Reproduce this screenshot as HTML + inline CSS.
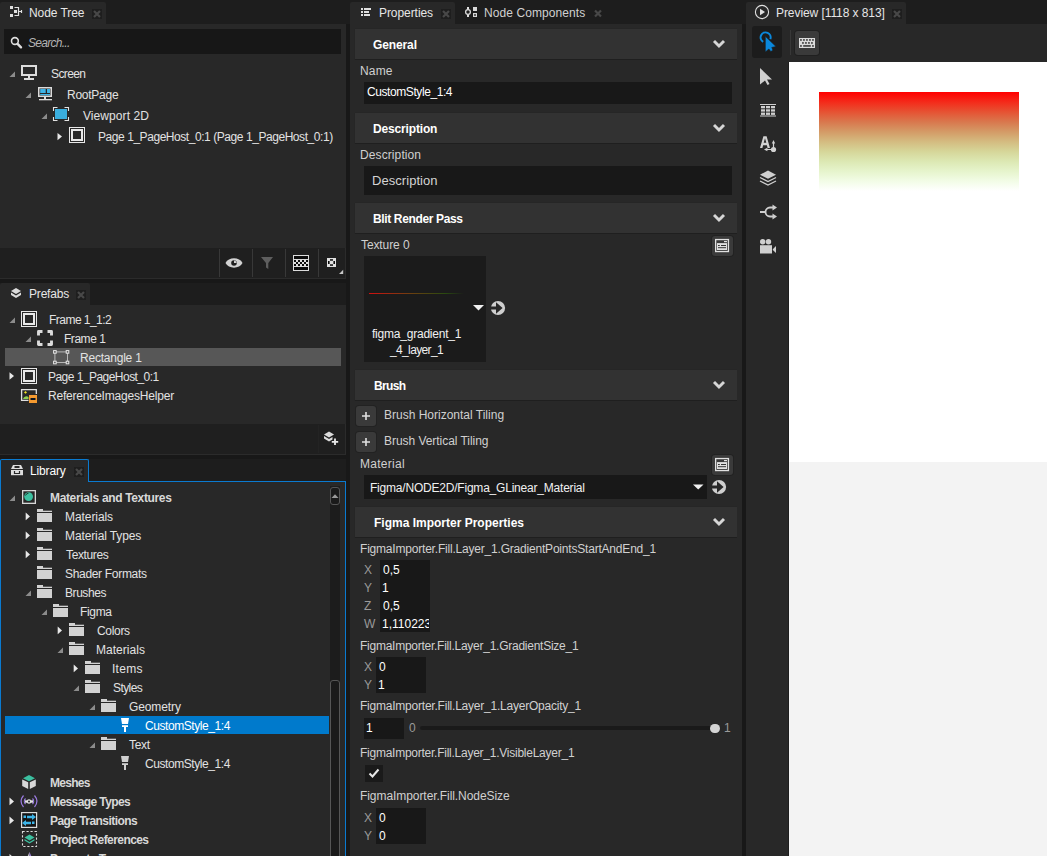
<!DOCTYPE html>
<html><head><meta charset="utf-8">
<style>
*{margin:0;padding:0;box-sizing:border-box}
html,body{width:1047px;height:856px;overflow:hidden;background:#181818;font-family:"Liberation Sans",sans-serif;font-size:12px;color:#dcdcdc}
.a{position:absolute}
.t{position:absolute;white-space:nowrap;line-height:16px;font-size:12px}
.p{position:absolute;background:#282828}
.tab{position:absolute;background:#282828;border-radius:2px 2px 0 0}
.hdr{position:absolute;left:355px;width:382px;height:31px;background:#323232;border-bottom:1px solid #1f1f1f;box-shadow:0 -1px 0 #262626,-1px 0 0 #262626}
.in{position:absolute;background:#181818}
#ic{position:absolute;left:0;top:0;width:1047px;height:856px}
</style></head><body>
<!-- top header strip -->
<div class="a" style="left:0;top:0;width:1047px;height:24px;background:#1d1d1d"></div>

<!-- ===== Node Tree ===== -->
<div class="tab" style="left:0;top:2px;width:106px;height:22px"></div>
<div class="p" style="left:0;top:24px;width:346px;height:224px"></div>
<div class="in" style="left:4px;top:29px;width:337px;height:25px;background:#171717"></div>
<div class="a" style="left:0;top:248px;width:346px;height:31px;background:#1f1f1f;border-bottom:1px solid #2b2b2b;border-right:1px solid #2b2b2b"></div>
<div class="a" style="left:219px;top:249px;width:1px;height:28px;background:#383838"></div>
<div class="a" style="left:252px;top:249px;width:1px;height:28px;background:#383838"></div>
<div class="a" style="left:285px;top:249px;width:1px;height:28px;background:#383838"></div>
<div class="a" style="left:318px;top:249px;width:1px;height:28px;background:#383838"></div>

<!-- ===== Prefabs ===== -->
<div class="a" style="left:0;top:283px;width:346px;height:22px;background:#1d1d1d"></div>
<div class="tab" style="left:0;top:283px;width:90px;height:22px"></div>
<div class="p" style="left:0;top:305px;width:346px;height:119px"></div>
<div class="a" style="left:5px;top:348px;width:336px;height:18px;background:#575757"></div>
<div class="a" style="left:0;top:424px;width:346px;height:31px;background:#1f1f1f;border-bottom:1px solid #2b2b2b;border-right:1px solid #2b2b2b"></div>

<div class="a" style="left:318px;top:425px;width:1px;height:28px;background:#232323"></div>
<!-- ===== Library ===== -->
<div class="a" style="left:0;top:459px;width:346px;height:22px;background:#1d1d1d"></div>
<div class="tab" style="left:0;top:459px;width:89px;height:23px;border:1px solid #0a7ad0;border-bottom:none"></div>
<div class="p" style="left:0;top:481px;width:346px;height:375px;border:1px solid #0a7ad0;border-top:none;border-bottom:none"></div>
<div class="a" style="left:88px;top:481px;width:258px;height:1px;background:#0a7ad0"></div>
<div class="a" style="left:5px;top:716px;width:324px;height:18px;background:#007acc"></div>
<div class="a" style="left:330px;top:486px;width:10px;height:370px;background:#1c1c1c"></div>
<div class="a" style="left:330px;top:487px;width:10px;height:18px;border:1px solid #555;border-radius:3px;background:#1a1a1a"></div>
<div class="a" style="left:330px;top:680px;width:10px;height:190px;border:1px solid #555;border-radius:3px;background:#1a1a1a"></div>

<!-- ===== Properties ===== -->
<div class="tab" style="left:350px;top:2px;width:105px;height:22px"></div>
<div class="p" style="left:350px;top:24px;width:392px;height:832px"></div>
<div class="hdr" style="top:29px"></div>
<div class="in" style="left:364px;top:82px;width:368px;height:22px"></div>
<div class="hdr" style="top:113px"></div>
<div class="in" style="left:364px;top:166px;width:368px;height:29px"></div>
<div class="hdr" style="top:203px"></div>
<div class="a" style="left:712px;top:236px;width:21px;height:20px;background:#3a3a3a;border-radius:3px;box-shadow:0 0 0 1px #222"></div>
<div class="in" style="left:364px;top:256px;width:122px;height:106px;background:#1b1b1b"></div>
<div class="a" style="left:369px;top:293px;width:95px;height:1px;background:linear-gradient(90deg,#d01010,#6a4010 45%,#2a4a10 80%,#1b1b1b)"></div>
<div class="hdr" style="top:370px"></div>
<div class="a" style="left:356px;top:406px;width:20px;height:20px;background:#3a3a3a;border-radius:3px;box-shadow:0 0 0 1px #222"></div>
<div class="a" style="left:356px;top:432px;width:20px;height:20px;background:#3a3a3a;border-radius:3px;box-shadow:0 0 0 1px #222"></div>
<div class="a" style="left:712px;top:455px;width:21px;height:20px;background:#3a3a3a;border-radius:3px;box-shadow:0 0 0 1px #222"></div>
<div class="in" style="left:364px;top:475px;width:343px;height:24px"></div>
<div class="hdr" style="top:507px"></div>
<div class="in" style="left:380px;top:560px;width:50px;height:72px"></div>
<div class="in" style="left:376px;top:657px;width:50px;height:36px"></div>
<div class="in" style="left:364px;top:718px;width:40px;height:21px"></div>
<div class="a" style="left:420px;top:726px;width:295px;height:4px;background:#1a1a1a;border-radius:2px"></div>
<div class="a" style="left:710px;top:723.5px;width:9.5px;height:9.5px;background:#d4d4d4;border-radius:50%"></div>
<div class="in" style="left:365px;top:765px;width:18px;height:17px;background:#1a1a1a"></div>
<div class="in" style="left:376px;top:808px;width:50px;height:36px"></div>

<!-- ===== Preview ===== -->
<div class="tab" style="left:746px;top:2px;width:160px;height:22px"></div>
<div class="p" style="left:746px;top:24px;width:301px;height:832px"></div>
<div class="a" style="left:752px;top:26px;width:30px;height:32px;background:#1c1c1c;border-radius:3px"></div>
<div class="a" style="left:790px;top:30px;width:1px;height:25px;background:#383838"></div>
<div class="a" style="left:795px;top:31px;width:24px;height:24px;background:#3a3a3a;border-radius:3px;box-shadow:0 0 0 1px #202020"></div>
<div class="a" style="left:788px;top:62px;width:1px;height:794px;background:#1e1e1e"></div>
<div class="a" style="left:789px;top:62px;width:258px;height:400px;background:#fff"></div>
<div class="a" style="left:789px;top:462px;width:258px;height:394px;background:#f3f3f3"></div>
<div id="grad" class="a" style="left:819px;top:92px;width:200px;height:99px"></div>

<svg id="ic" width="1047" height="856" viewBox="0 0 1047 856">
<defs>
 <linearGradient id="pg" x1="0" y1="0" x2="0" y2="1">
  <stop offset="0" stop-color="#ff0000"/>
  <stop offset="0.1" stop-color="#f42a1a"/>
  <stop offset="0.2" stop-color="#e65233"/>
  <stop offset="0.3" stop-color="#d9774d"/>
  <stop offset="0.4" stop-color="#d49a66"/>
  <stop offset="0.5" stop-color="#d4bb80"/>
  <stop offset="0.6" stop-color="#d6d699"/>
  <stop offset="0.7" stop-color="#dce8b3"/>
  <stop offset="0.8" stop-color="#e6f4cc"/>
  <stop offset="0.9" stop-color="#f2fce6"/>
  <stop offset="1" stop-color="#ffffff"/>
 </linearGradient>
</defs>
<!-- preview gradient -->
<rect x="819" y="92" width="200" height="99" fill="url(#pg)"/>

<!-- ===== tab icons ===== -->
<!-- node tree icon -->
<g fill="#e0e0e0">
 <rect x="10" y="6" width="3" height="3"/><rect x="14" y="10" width="3" height="3"/><rect x="10" y="14" width="3" height="3"/>
</g>
<path d="M14.5 7.5H18.5V15.5H14.5M18.5 11.5H21.5M21.5 10V13" stroke="#e0e0e0" stroke-width="1.2" fill="none"/>
<!-- close boxes -->
<g>
 <rect x="92" y="9" width="10" height="10" fill="#1e1e1e"/>
 <path d="M94 11L100 17M100 11L94 17" stroke="#484848" stroke-width="2.2"/>
 <rect x="76" y="290" width="10" height="10" fill="#1e1e1e"/>
 <path d="M78 292L84 298M84 292L78 298" stroke="#484848" stroke-width="2.2"/>
 <rect x="74" y="467" width="10" height="10" fill="#1e1e1e"/>
 <path d="M76 469L82 475M82 469L76 475" stroke="#484848" stroke-width="2.2"/>
 <rect x="441" y="9" width="10" height="10" fill="#1e1e1e"/>
 <path d="M443 11L449 17M449 11L443 17" stroke="#484848" stroke-width="2.2"/>
 <path d="M595 10.5L601 16.5M601 10.5L595 16.5" stroke="#484848" stroke-width="2.2"/>
 <rect x="892" y="9" width="10" height="10" fill="#1e1e1e"/>
 <path d="M894 11L900 17M900 11L894 17" stroke="#484848" stroke-width="2.2"/>
</g>
<!-- search -->
<circle cx="14.9" cy="41" r="3.4" stroke="#dedede" stroke-width="1.6" fill="none"/>
<path d="M17.6 43.8L21 47.3" stroke="#dedede" stroke-width="2.4" stroke-linecap="round"/>

<!-- ===== node tree ===== -->
<g fill="#8c8c8c">
 <path d="M9.5 77L15 77L15 71.5Z"/>
 <path d="M25.5 98L31 98L31 92.5Z"/>
 <path d="M41.5 119L47 119L47 113.5Z"/>
</g>
<path d="M57.5 133L62 136.6L57.5 140.2Z" fill="#e8e8e8"/>
<!-- screen icon -->
<rect x="22" y="66" width="14" height="9" stroke="#dcdcdc" stroke-width="2" fill="none"/>
<rect x="28" y="76" width="2" height="2" fill="#dcdcdc"/>
<rect x="24" y="78" width="10" height="2" fill="#dcdcdc"/>
<!-- rootpage icon -->
<rect x="38.75" y="87.75" width="12.5" height="8.5" stroke="#dcdcdc" stroke-width="1.5" fill="none"/>
<rect x="40.2" y="89" width="5.5" height="4" fill="#3db4e8"/>
<rect x="47" y="89" width="3" height="4" fill="#3db4e8"/>
<rect x="40.2" y="94" width="9.8" height="1.2" fill="#3db4e8"/>
<rect x="44" y="97" width="2" height="2" fill="#dcdcdc"/>
<rect x="39" y="99" width="13" height="1.3" fill="#dcdcdc"/>
<!-- viewport icon -->
<path d="M53.5 111V107.5H57.5M64.5 107.5H68.5V111M68.5 117V120.5H64.5M57.5 120.5H53.5V117" stroke="#e4e4e4" stroke-width="1.1" fill="none"/>
<rect x="55" y="109" width="12" height="10" fill="#3aaede"/>
<!-- page icon (double square) -->
<g id="dsq">
<rect x="69.5" y="127.5" width="15" height="15" stroke="#e8e8e8" stroke-width="1" fill="none"/>
<rect x="72" y="130" width="10" height="10" stroke="#e8e8e8" stroke-width="2" fill="none"/>
</g>

<!-- toolbar icons -->
<path d="M225.5 263C228.5 256.8 239.5 256.8 242.5 263C239.5 269.2 228.5 269.2 225.5 263Z" fill="#d2d2d2"/>
<circle cx="234" cy="263" r="2.8" fill="#1f1f1f"/>
<path d="M234 263L234 260.5A2.5 2.5 0 0 1 236.5 263Z" fill="#d2d2d2"/>
<path d="M261 257H273L268.3 263V269L266 267.5V263Z" fill="#5e5e5e"/>
<rect x="293" y="255" width="16" height="16" fill="#dcdcdc"/>
<g fill="#0c0c0c">
<rect x="294" y="256" width="14" height="3"/><rect x="294" y="267" width="14" height="3"/>
<rect x="294" y="260" width="2" height="2"/><rect x="298" y="260" width="2" height="2"/><rect x="302" y="260" width="2" height="2"/><rect x="306" y="260" width="2" height="2"/>
<rect x="296" y="262" width="2" height="2"/><rect x="300" y="262" width="2" height="2"/><rect x="304" y="262" width="2" height="2"/>
<rect x="294" y="264" width="2" height="2"/><rect x="298" y="264" width="2" height="2"/><rect x="302" y="264" width="2" height="2"/><rect x="306" y="264" width="2" height="2"/>
</g>
<rect x="327" y="258" width="9" height="9" fill="#e0e0e0"/>
<g fill="#0c0c0c"><rect x="330" y="259.2" width="3" height="1.5"/><rect x="330" y="264.3" width="3" height="1.5"/><rect x="328" y="261" width="1.6" height="3"/><rect x="333.4" y="261" width="1.6" height="3"/></g>

<path d="M339 274H343.2V269.8Z" fill="#c8c8c8"/>

<!-- ===== prefabs ===== -->
<path d="M16 288L21 291L16 294L11 291Z" fill="#dcdcdc"/>
<path d="M11 292.5L16 295.5L21 292.5V295L16 298L11 295Z" fill="#dcdcdc"/>
<path d="M9.5 323L15 323L15 317.5Z" fill="#8c8c8c"/>
<path d="M25.5 342L31 342L31 336.5Z" fill="#8c8c8c"/>
<use href="#dsq" x="-48" y="184"/>
<!-- frame 1 corners -->
<path d="M38.5 335.5V331.5H42.5M47.5 331.5H51.5V335.5M51.5 340.5V344.5H47.5M42.5 344.5H38.5V340.5" stroke="#dcdcdc" stroke-width="2.9" stroke-linejoin="round" fill="none"/>
<!-- rectangle -->
<rect x="54.9" y="351.9" width="12.6" height="10.6" stroke="#b8b8b8" stroke-width="1" fill="none"/>
<g stroke="#e8e8e8" stroke-width="1" fill="#575757">
<rect x="53.6" y="350.6" width="2.6" height="2.6"/><rect x="66.2" y="350.6" width="2.6" height="2.6"/>
<rect x="53.6" y="361.2" width="2.6" height="2.6"/><rect x="66.2" y="361.2" width="2.6" height="2.6"/>
</g>
<path d="M9.5 372.3L14 376L9.5 379.7Z" fill="#e8e8e8"/>
<use href="#dsq" x="-48" y="241"/>
<!-- reference images helper -->
<path d="M36.3 394V389.6H21.6V400.4H28.5" stroke="#e0e0e0" stroke-width="1.3" fill="none"/>
<path d="M25.5 391L27 392.4L25.5 393.8L24 392.4Z" fill="#f0e020"/>
<path d="M23 399C24 396.5 26.5 395.5 28.5 397V399Z" fill="#90d050"/>
<rect x="29" y="395" width="8" height="8" fill="#f59a30"/>
<rect x="30.5" y="398" width="5" height="2" fill="#0c1420"/>
<!-- add prefab icon -->
<path d="M329 431.5L334 434.5L329 437.5L324 434.5Z" fill="#dcdcdc"/>
<path d="M324 436L329 439L332.5 437V439.5L329 441.5L324 438.5Z" fill="#dcdcdc"/>
<path d="M335 438.5V445M331.8 441.8H338.2" stroke="#e8e8e8" stroke-width="1.8"/>

<!-- ===== library ===== -->
<path d="M13 465H21L23 469H11Z" fill="#dedede"/>
<rect x="14.5" y="466" width="5" height="2" fill="#282828"/>
<rect x="11" y="470" width="12" height="5.2" fill="#dedede"/>
<path d="M14.5 471V473.5H19.5V471" stroke="#282828" stroke-width="1.2" fill="none"/>
<!-- triangles library -->
<g fill="#8c8c8c">
<path d="M9.5 501L15 501L15 495.5Z"/>
<path d="M25.5 596L31 596L31 590.5Z"/>
<path d="M41.5 615L47 615L47 609.5Z"/>
<path d="M57.5 653L63 653L63 647.5Z"/>
<path d="M73.5 691L79 691L79 685.5Z"/>
<path d="M89.5 710L95 710L95 704.5Z"/>
<path d="M89.5 748L95 748L95 742.5Z"/>
</g>
<g fill="#e8e8e8">
<path d="M25.7 512.6L30 516.4L25.7 520.3Z"/>
<path d="M25.7 531.6L30 535.4L25.7 539.3Z"/>
<path d="M25.7 550.6L30 554.4L25.7 558.3Z"/>
<path d="M57.7 626.6L62 630.4L57.7 634.3Z"/>
<path d="M73.7 664.6L78 668.4L73.7 672.3Z"/>
<path d="M9.5 797.6L14 801.4L9.5 805.3Z"/>
<path d="M9.5 816.6L14 820.4L9.5 824.3Z"/>
</g>
<!-- materials icon -->
<rect x="22.65" y="490.65" width="12.7" height="12.7" stroke="#d8d8d8" stroke-width="1.3" fill="none"/>
<circle cx="28.6" cy="496.6" r="4.4" fill="#3cc0a0"/>
<path d="M25.5 495.5A3.5 3.5 0 0 1 28.5 493.2" stroke="#1e2a26" stroke-width="0.9" fill="none"/>
<!-- folders -->
<g id="fld" fill="#d2d2d2">
<rect x="37" y="509" width="6" height="3"/>
<rect x="37" y="510.7" width="15" height="1.3"/>
<rect x="37" y="513" width="15" height="9"/>
</g>
<use href="#fld" y="19"/><use href="#fld" y="38"/><use href="#fld" y="57"/><use href="#fld" y="76"/>
<use href="#fld" x="16" y="95"/>
<use href="#fld" x="32" y="114"/><use href="#fld" x="32" y="133"/>
<use href="#fld" x="48" y="152"/><use href="#fld" x="48" y="171"/>
<use href="#fld" x="64" y="190"/><use href="#fld" x="64" y="228"/>
<!-- style brush icons -->
<g id="sty" fill="#ffffff">
<path d="M121 718H129L128 724H122Z"/>
<rect x="122" y="725.2" width="6" height="1.8"/>
<rect x="124" y="727" width="2" height="5"/>
</g>
<g fill="#d0d0d0">
<path d="M121 756H129L128 762H122Z"/>
<rect x="122" y="763.2" width="6" height="1.8"/>
<rect x="124" y="765" width="2" height="5"/>
</g>
<!-- meshes -->
<path d="M29 775L35 778.3L29 781.3L23 778.3Z" fill="#3cc0a0"/>
<path d="M22.2 779.5L28.2 782.3V789L22.2 786Z" fill="#d8d8d8"/>
<path d="M29.8 782.3L35.8 779.5V786L29.8 789Z" fill="#d8d8d8"/>
<!-- message types -->
<path d="M23.5 795.5C20.5 799 20.5 803.5 23.5 807M34.5 795.5C37.5 799 37.5 803.5 34.5 807" stroke="#9b7be0" stroke-width="1.2" fill="none"/>
<path d="M25.5 798.5C24 800 24 802.5 25.5 804M32.5 798.5C34 800 34 802.5 32.5 804" stroke="#9b7be0" stroke-width="1.2" fill="none"/>
<rect x="25" y="800.3" width="8" height="2.4" fill="#e0e0e0"/>
<circle cx="29" cy="801.5" r="2.2" fill="#e0e0e0"/>
<circle cx="29" cy="801.5" r="0.9" fill="#111"/>
<!-- page transitions -->
<rect x="21.6" y="812.6" width="15" height="14.8" stroke="#dcdcdc" stroke-width="1.2" fill="#141414"/>
<g fill="#3db4e8">
<rect x="23.5" y="815.5" width="2.5" height="2.5"/>
<path d="M27 815.8H32V814L36 817L32 820V818.2H27Z"/>
<rect x="32" y="821.5" width="2.5" height="2.5"/>
<path d="M31 821.8H26V820L22 823L26 826V824.2H31Z"/>
</g>
<!-- project references -->
<rect x="22.5" y="831.5" width="14" height="15" stroke="#dcdcdc" stroke-width="1.1" stroke-dasharray="2.2 1.8" fill="none"/>
<path d="M29.5 834.5L34.5 837.5L29.5 840.5L24.5 837.5Z" fill="#3cc0a0"/>
<path d="M24.5 839L29.5 842L34.5 839V840.5L29.5 843.5L24.5 840.5Z" fill="#3cc0a0"/>
<!-- property types partial -->
<path d="M9.5 854L13 857L9.5 860Z" fill="#e8e8e8"/>
<path d="M26 860L29.5 852V860Z" fill="#cfcfcf"/>
<path d="M29.5 852L33 860H29.5Z" fill="#a080e0"/>
<!-- scrollbar up arrow -->
<path d="M331.5 498H338.5L335 494.3Z" fill="#9a9a9a"/>

<!-- ===== properties ===== -->
<g fill="#e0e0e0">
<rect x="361" y="8" width="2" height="2"/><rect x="364" y="8" width="7" height="2"/>
<rect x="361" y="11" width="2" height="2"/><rect x="364" y="11" width="5" height="2"/>
<rect x="361" y="14" width="2" height="2"/><rect x="364" y="14" width="6" height="2"/>
</g>
<!-- node components icon -->
<circle cx="468" cy="12" r="2.4" stroke="#d8d8d8" stroke-width="1.3" fill="none"/>
<path d="M468 7V9.6M468 14.4V17" stroke="#e0e0e0" stroke-width="2"/>
<rect x="473" y="7" width="4" height="4" fill="#d8d8d8"/>
<rect x="473.6" y="13.6" width="2.8" height="2.8" stroke="#d8d8d8" stroke-width="1.2" fill="none"/>
<!-- chevrons -->
<g stroke="#d6d6d6" stroke-width="2.9" fill="none" stroke-linecap="butt">
<path d="M714 41L719 46L724 41"/>
<path d="M714 125L719 130L724 125"/>
<path d="M714 215L719 220L724 215"/>
<path d="M714 382L719 387L724 382"/>
<path d="M714 519L719 524L724 519"/>
</g>
<!-- texture/material pick buttons -->
<g id="pk">
<rect x="715.65" y="239.55" width="12.8" height="12" stroke="#e0e0e0" stroke-width="1.3" fill="none"/>
<rect x="724" y="241" width="3" height="1.2" fill="#e0e0e0"/>
<rect x="717" y="243.1" width="10" height="6.9" fill="#e0e0e0"/>
<rect x="718" y="245" width="1.8" height="1" fill="#333"/><rect x="721" y="245" width="5" height="1" fill="#333"/>
<rect x="718" y="247.2" width="8" height="1" fill="#333"/>
</g>
<use href="#pk" y="219"/>
<!-- texture dropdown + reset -->
<path d="M473 305H484L478.5 310.5Z" fill="#f0f0f0"/>
<path d="M693 484.5H703.5L698.2 489.5Z" fill="#f0f0f0"/>
<g id="rst">
<circle cx="498" cy="308" r="7.1" fill="#cfcfcf"/>
<path d="M490 306.4H496V302.3L502.6 308L496 313.7V309.6H490Z" fill="#282828"/>
</g>
<use href="#rst" x="221" y="179"/>
<!-- plus buttons -->
<path d="M362 416H370M366 412V420" stroke="#e0e0e0" stroke-width="1.6"/>
<path d="M362 442H370M366 438V446" stroke="#e0e0e0" stroke-width="1.6"/>
<!-- checkbox check -->
<path d="M369.5 773.5L372.5 776.5L378.5 769.5" stroke="#e8e8e8" stroke-width="2" fill="none"/>

<!-- ===== preview ===== -->
<circle cx="762" cy="12" r="6.6" stroke="#e0e0e0" stroke-width="1.1" fill="none"/>
<path d="M760 8.8V15.2L765 12Z" fill="#e0e0e0"/>
<!-- select tool blue -->
<path d="M763.2 41.8A5 5 0 1 1 770.3 39.2" stroke="#0a88dc" stroke-width="2" fill="none"/>
<path d="M765.3 36.2L776 46.6L771.8 47.4L772.9 50.2L770.8 51.6L768.9 49L765.3 52Z" fill="#0a88dc" stroke="#1c1c1c" stroke-width="0.6"/>
<!-- keyboard -->
<rect x="799" y="38" width="16" height="10" fill="#dadada"/>
<g fill="#151515">
<rect x="800.2" y="39.2" width="1.5" height="1.5"/><rect x="803.2" y="39.2" width="1.5" height="1.5"/><rect x="806.2" y="39.2" width="1.5" height="1.5"/><rect x="809.2" y="39.2" width="1.5" height="1.5"/><rect x="812.2" y="39.2" width="1.5" height="1.5"/>
<rect x="802.2" y="42.2" width="1.5" height="1.5"/><rect x="805.2" y="42.2" width="1.5" height="1.5"/><rect x="808.2" y="42.2" width="1.5" height="1.5"/><rect x="811.2" y="42.2" width="1.5" height="1.5"/>
<rect x="800.2" y="45.2" width="1.5" height="1.5"/><rect x="803.2" y="45.3" width="7.6" height="1.3"/><rect x="812.2" y="45.2" width="1.5" height="1.5"/>
</g>
<!-- left tools -->
<path d="M760 68L772 79.5H767L769.5 84L767.5 85L765 80.5L760 84.5Z" fill="#cfcfcf"/>
<g fill="#cfcfcf">
<rect x="760" y="104" width="16" height="1"/>
<rect x="761" y="106" width="4" height="2.3"/><rect x="766" y="106" width="4" height="2.3"/><rect x="771" y="106" width="4" height="2.3"/>
<rect x="761" y="109.3" width="4" height="2.3"/><rect x="766" y="109.3" width="4" height="2.3"/><rect x="771" y="109.3" width="4" height="2.3"/>
<rect x="761" y="112.6" width="4" height="2.3"/><rect x="766" y="112.6" width="4" height="2.3"/><rect x="771" y="112.6" width="4" height="2.3"/>
<rect x="760" y="115.5" width="16" height="1"/>
</g>
<path d="M760 148L763.4 136.2H766.6L770 148H767.6L766.9 145.2H763.1L762.4 148Z M763.7 142.8H766.3L765 138.2Z" fill="#d2d2d2" fill-rule="evenodd"/>
<path d="M773.5 149V142.5M767 149.5H773" stroke="#d2d2d2" stroke-width="1.2" fill="none"/>
<path d="M771.8 143.6L773.5 140L775.2 143.6Z M767.4 147.8L764 149.5L767.4 151.2Z" fill="#d2d2d2"/>
<circle cx="773.5" cy="149.5" r="2.6" fill="#d2d2d2"/>
<path d="M768 170.5L776 174.7L768 178.8L760 174.7Z" fill="#cfcfcf"/>
<path d="M760 177.5L768 181.5L776 177.5M760 181L768 185L776 181" stroke="#cfcfcf" stroke-width="1.3" fill="none"/>
<path d="M760 212H765.5M775 207.5H770A4.5 4.5 0 0 0 770 216.5H775" stroke="#cfcfcf" stroke-width="1.8" fill="none"/>
<path d="M772.5 204.5L777 207.5L772.5 210.5Z M772.5 213.5L777 216.5L772.5 219.5Z" fill="#cfcfcf"/>
<circle cx="762.7" cy="241.8" r="2.7" fill="#cfcfcf"/>
<circle cx="768.5" cy="241.8" r="2.7" fill="#cfcfcf"/>
<rect x="760" y="245.2" width="12" height="8.3" fill="#cfcfcf"/>
<path d="M772.8 249.3L776 246V253L772.8 250Z" fill="#cfcfcf"/>
</svg>

<div class="t" style="left:29px;top:5px;color:#e6e6e6;letter-spacing:-0.075px">Node Tree</div>
<div class="t" style="left:28px;top:35px;color:#b4b4b4;letter-spacing:-0.713px;font-style:italic">Search...</div>
<div class="t" style="left:51px;top:66px;color:#e2e2e2;letter-spacing:-0.600px">Screen</div>
<div class="t" style="left:67px;top:87px;color:#e2e2e2;letter-spacing:-0.257px">RootPage</div>
<div class="t" style="left:83px;top:108px;color:#e2e2e2;letter-spacing:0.070px">Viewport 2D</div>
<div class="t" style="left:98px;top:129px;color:#e2e2e2;letter-spacing:-0.443px">Page 1_PageHost_0:1 (Page 1_PageHost_0:1)</div>
<div class="t" style="left:29px;top:286px;color:#e6e6e6;letter-spacing:-0.183px">Prefabs</div>
<div class="t" style="left:49px;top:312px;color:#e2e2e2;letter-spacing:-0.530px">Frame 1_1:2</div>
<div class="t" style="left:64px;top:331px;color:#e2e2e2;letter-spacing:-0.467px">Frame 1</div>
<div class="t" style="left:80px;top:350px;color:#e2e2e2;letter-spacing:-0.220px">Rectangle 1</div>
<div class="t" style="left:48px;top:369px;color:#e2e2e2;letter-spacing:-0.533px">Page 1_PageHost_0:1</div>
<div class="t" style="left:48px;top:388px;color:#e2e2e2;letter-spacing:-0.195px">ReferenceImagesHelper</div>
<div class="t" style="left:30px;top:463px;color:#ffffff;letter-spacing:-0.150px">Library</div>
<div class="t" style="left:50px;top:490px;color:#d8d8d8;letter-spacing:-0.348px;font-weight:bold">Materials and Textures</div>
<div class="t" style="left:65px;top:509px;color:#e2e2e2;letter-spacing:-0.075px">Materials</div>
<div class="t" style="left:65px;top:528px;color:#e2e2e2;letter-spacing:-0.115px">Material Types</div>
<div class="t" style="left:66px;top:547px;color:#e2e2e2;letter-spacing:-0.371px">Textures</div>
<div class="t" style="left:65px;top:566px;color:#e2e2e2;letter-spacing:-0.315px">Shader Formats</div>
<div class="t" style="left:65px;top:585px;color:#e2e2e2;letter-spacing:-0.433px">Brushes</div>
<div class="t" style="left:80px;top:604px;color:#e2e2e2;letter-spacing:-0.325px">Figma</div>
<div class="t" style="left:97px;top:623px;color:#e2e2e2;letter-spacing:-0.320px">Colors</div>
<div class="t" style="left:96px;top:642px;color:#e2e2e2;letter-spacing:0.025px">Materials</div>
<div class="t" style="left:112px;top:661px;color:#e2e2e2;letter-spacing:0.275px">Items</div>
<div class="t" style="left:113px;top:680px;color:#e2e2e2;letter-spacing:-0.580px">Styles</div>
<div class="t" style="left:129px;top:699px;color:#e2e2e2;letter-spacing:-0.114px">Geometry</div>
<div class="t" style="left:145px;top:718px;color:#ffffff;letter-spacing:-0.429px">CustomStyle_1:4</div>
<div class="t" style="left:129px;top:737px;color:#e2e2e2;letter-spacing:-0.333px">Text</div>
<div class="t" style="left:145px;top:756px;color:#e2e2e2;letter-spacing:-0.429px">CustomStyle_1:4</div>
<div class="t" style="left:50px;top:775px;color:#d8d8d8;letter-spacing:-0.700px;font-weight:bold">Meshes</div>
<div class="t" style="left:50px;top:794px;color:#d8d8d8;letter-spacing:-0.592px;font-weight:bold">Message Types</div>
<div class="t" style="left:50px;top:813px;color:#d8d8d8;letter-spacing:-0.560px;font-weight:bold">Page Transitions</div>
<div class="t" style="left:50px;top:832px;color:#d8d8d8;letter-spacing:-0.571px;font-weight:bold">Project References</div>
<div class="t" style="left:50px;top:851px;color:#d8d8d8;letter-spacing:-0.423px;font-weight:bold">Property Types</div>
<div class="t" style="left:379px;top:5px;color:#e6e6e6;letter-spacing:-0.067px">Properties</div>
<div class="t" style="left:484px;top:5px;color:#d0d0d0;letter-spacing:0.079px">Node Components</div>
<div class="t" style="left:373px;top:37px;color:#ffffff;letter-spacing:-0.117px;font-weight:bold">General</div>
<div class="t" style="left:360px;top:63px;color:#d0d0d0;letter-spacing:0.167px">Name</div>
<div class="t" style="left:367px;top:84px;color:#ffffff;letter-spacing:-0.421px">CustomStyle_1:4</div>
<div class="t" style="left:373px;top:121px;color:#ffffff;letter-spacing:-0.160px;font-weight:bold">Description</div>
<div class="t" style="left:360px;top:147px;color:#d0d0d0;letter-spacing:0.100px">Description</div>
<div class="t" style="left:372px;top:173px;color:#d4d4d4;font-size:13px;letter-spacing:0.050px">Description</div>
<div class="t" style="left:373px;top:211px;color:#ffffff;letter-spacing:-0.360px;font-weight:bold">Blit Render Pass</div>
<div class="t" style="left:361px;top:237px;color:#d0d0d0;letter-spacing:-0.100px">Texture 0</div>
<div class="t" style="left:372px;top:326px;color:#f0f0f0;letter-spacing:-0.220px">figma_gradient_1</div>
<div class="t" style="left:390px;top:342px;color:#f0f0f0;letter-spacing:-0.633px">_4_layer_1</div>
<div class="t" style="left:374px;top:378px;color:#ffffff;letter-spacing:-0.675px;font-weight:bold">Brush</div>
<div class="t" style="left:384px;top:407px;color:#d0d0d0">Brush Horizontal Tiling</div>
<div class="t" style="left:384px;top:433px;color:#d0d0d0;letter-spacing:-0.045px">Brush Vertical Tiling</div>
<div class="t" style="left:360px;top:456px;color:#d0d0d0;letter-spacing:0.286px">Material</div>
<div class="t" style="left:370px;top:480px;color:#f0f0f0;letter-spacing:-0.209px">Figma/NODE2D/Figma_GLinear_Material</div>
<div class="t" style="left:374px;top:515px;color:#ffffff;font-weight:bold">Figma Importer Properties</div>
<div class="t" style="left:360px;top:541px;color:#d0d0d0;letter-spacing:-0.200px">FigmaImporter.Fill.Layer_1.GradientPointsStartAndEnd_1</div>
<div class="t" style="left:360px;top:638px;color:#d0d0d0;letter-spacing:-0.255px">FigmaImporter.Fill.Layer_1.GradientSize_1</div>
<div class="t" style="left:360px;top:698px;color:#d0d0d0;letter-spacing:-0.222px">FigmaImporter.Fill.Layer_1.LayerOpacity_1</div>
<div class="t" style="left:360px;top:745px;color:#d0d0d0;letter-spacing:-0.250px">FigmaImporter.Fill.Layer_1.VisibleLayer_1</div>
<div class="t" style="left:360px;top:788px;color:#d0d0d0;letter-spacing:-0.065px">FigmaImporter.Fill.NodeSize</div>
<div class="t" style="left:364px;top:562px;color:#9a9a9a">X</div>
<div class="t" style="left:383px;top:562px;color:#ffffff;width:47px;overflow:hidden">0,5</div>
<div class="t" style="left:364px;top:580px;color:#9a9a9a">Y</div>
<div class="t" style="left:382px;top:580px;color:#ffffff;width:47px;overflow:hidden">1</div>
<div class="t" style="left:364px;top:598px;color:#9a9a9a">Z</div>
<div class="t" style="left:383px;top:598px;color:#ffffff;width:47px;overflow:hidden">0,5</div>
<div class="t" style="left:364px;top:616px;color:#9a9a9a">W</div>
<div class="t" style="left:382px;top:616px;color:#ffffff;width:47px;overflow:hidden">1,110223</div>
<div class="t" style="left:364px;top:659px;color:#9a9a9a">X</div>
<div class="t" style="left:379px;top:659px;color:#ffffff">0</div>
<div class="t" style="left:364px;top:677px;color:#9a9a9a">Y</div>
<div class="t" style="left:378px;top:677px;color:#ffffff">1</div>
<div class="t" style="left:364px;top:810px;color:#9a9a9a">X</div>
<div class="t" style="left:379px;top:810px;color:#ffffff">0</div>
<div class="t" style="left:364px;top:828px;color:#9a9a9a">Y</div>
<div class="t" style="left:379px;top:828px;color:#ffffff">0</div>
<div class="t" style="left:366px;top:720px;color:#ffffff">1</div>
<div class="t" style="left:409px;top:720px;color:#9a9a9a">0</div>
<div class="t" style="left:724px;top:720px;color:#9a9a9a">1</div>
<div class="t" style="left:776px;top:5px;color:#e6e6e6;letter-spacing:-0.074px">Preview [1118 x 813]</div>
</body></html>
